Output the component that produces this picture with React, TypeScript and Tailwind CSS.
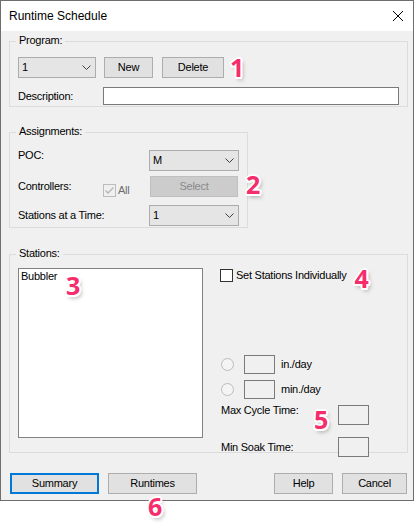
import React from 'react';

const Mark: React.FC<{ n: string; className?: string }> = ({ n, className = '' }) => (
  <span
    className={`shrink-0 font-['Open_Sans',Arial,sans-serif] text-[25px] leading-none font-bold text-[#f62d6d] [text-shadow:-1.5px_-1.5px_0_#fff,1.5px_-1.5px_0_#fff,-1.5px_1.5px_0_#fff,1.5px_1.5px_0_#fff,0_2px_0_#fff,2px_0_0_#fff,-2px_0_0_#fff,0_-2px_0_#fff,2px_3px_4px_rgba(0,0,0,0.35)] ${className}`}
  >
    {n}
  </span>
);

const Chevron = () => (
  <svg width="9" height="5" viewBox="0 0 9 5" className="shrink-0">
    <polyline points="0.5,0.5 4.5,4.5 8.5,0.5" fill="none" stroke="#404040" strokeWidth="1" />
  </svg>
);

const Combo: React.FC<{ value: string; className?: string }> = ({ value, className = '' }) => (
  <div className={`shrink-0 h-[21px] border border-[#acacac] bg-[#e5e5e5] flex items-center justify-between pl-[3px] pr-[4px] ${className}`}>
    <span>{value}</span>
    <Chevron />
  </div>
);

const Button: React.FC<{ label: string; className?: string }> = ({ label, className = '' }) => (
  <button className={`shrink-0 h-[21px] border border-[#adadad] bg-[#e1e1e1] flex items-center justify-center ${className}`}>
    {label}
  </button>
);

const TextBox: React.FC<{ className?: string }> = ({ className = '' }) => (
  <div className={`shrink-0 border border-[#7a7a7a] bg-[#f0f0f0] ${className}`} />
);

const Radio = () => (
  <span className="w-[13px] h-[13px] rounded-full border border-[#bcbcbc] bg-[#f4f4f4] shrink-0" />
);

const GroupLabel: React.FC<{ text: string }> = ({ text }) => (
  <span className="absolute -top-[8px] left-[6px] px-[3px] bg-[#f0f0f0] leading-[13px]">{text}</span>
);

export default function App() {
  return (
    <div className="relative w-[414px] h-[527px] bg-white font-['Liberation_Sans',Arial,sans-serif] text-black text-[11px] tracking-[-0.25px] leading-[13px]">
      <div className="w-[414px] h-[501px] border border-[#6e6e6e] flex flex-col">
        {/* Title bar */}
        <div className="h-[30px] bg-white flex items-center justify-between pl-[8px] pr-[10px]">
          <span className="text-[12px] tracking-normal">Runtime Schedule</span>
          <svg width="10" height="10" viewBox="0 0 10 10">
            <path d="M0 0 L10 10 M10 0 L0 10" stroke="#000" strokeWidth="1" />
          </svg>
        </div>

        <div className="flex-1 bg-[#f0f0f0] pt-[10px] pl-[8px]">
          {/* Program */}
          <div className="relative w-[399px] h-[66px] border border-[#dcdcdc] pt-[15px] pl-[8px]">
            <GroupLabel text="Program:" />
            <div className="flex items-center h-[21px]">
              <Combo value="1" className="w-[78px]" />
              <Button label="New" className="w-[49px] ml-[8px]" />
              <Button label="Delete" className="w-[62px] ml-[9px]" />
              <Mark n="1" className="ml-[6px]" />
            </div>
            <div className="flex items-center mt-[9px]">
              <span className="w-[85px] shrink-0">Description:</span>
              <div className="w-[296px] h-[18px] shrink-0 border border-[#7a7a7a] bg-white" />
            </div>
          </div>

          {/* Assignments */}
          <div className="relative w-[239px] h-[96px] mt-[25px] border border-[#dcdcdc] pt-[17px] pl-[8px]">
            <GroupLabel text="Assignments:" />
            <div className="flex items-start h-[21px]">
              <span className="w-[131px] shrink-0 -mt-[1px]">POC:</span>
              <Combo value="M" className="w-[90px]" />
            </div>
            <div className="flex items-center h-[21px] mt-[5px]">
              <span className="w-[85px] shrink-0">Controllers:</span>
              <div className="w-[47px] shrink-0 self-end flex items-center">
                <span className="w-[13px] h-[13px] border border-[#bcbcbc] bg-[#f0f0f0] flex items-center justify-center">
                  <svg width="11" height="11" viewBox="0 0 11 11">
                    <polyline points="1.5,5.5 4,8 9.5,2.5" fill="none" stroke="#b4b4b4" strokeWidth="1.3" />
                  </svg>
                </span>
                <span className="ml-[2px] text-[#6d6d6d]">All</span>
              </div>
              <button className="w-[88px] h-[21px] shrink-0 border border-[#bfbfbf] bg-[#cccccc] text-[#8a8a8a] flex items-center justify-center">
                Select
              </button>
              <Mark n="2" className="ml-[8px] -mt-[4px]" />
            </div>
            <div className="flex items-center h-[21px] mt-[8px]">
              <span className="w-[131px] shrink-0">Stations at a Time:</span>
              <Combo value="1" className="w-[90px]" />
            </div>
          </div>

          {/* Stations */}
          <div className="relative w-[399px] h-[199px] mt-[26px] border border-[#dcdcdc] pt-[13px] pl-[8px] flex">
            <GroupLabel text="Stations:" />
            <div className="relative w-[185px] h-[170px] shrink-0 border border-[#828282] bg-white pl-[2px] pt-[1px]">
              <span>Bubbler</span>
              <Mark n="3" className="absolute left-[47px] top-[4px]" />
            </div>
            <div className="ml-[17px] pt-[1px] flex flex-col w-[149px] shrink-0">
              <div className="flex items-center h-[13px]">
                <span className="w-[13px] h-[13px] border border-[#333333] bg-white shrink-0" />
                <span className="ml-[3px] whitespace-nowrap">Set Stations Individually</span>
                <Mark n="4" className="ml-[8px] mt-[6px]" />
              </div>
              <div className="flex items-center mt-[73px] pl-[1px]">
                <Radio />
                <TextBox className="w-[31px] h-[19px] ml-[10px]" />
                <span className="ml-[6px]">in./day</span>
              </div>
              <div className="flex items-center mt-[6px] pl-[1px]">
                <Radio />
                <TextBox className="w-[31px] h-[19px] ml-[10px]" />
                <span className="ml-[6px]">min./day</span>
              </div>
              <div className="flex items-start mt-[6px] pl-[1px]">
                <span className="flex-1 -mt-[1px]">Max Cycle Time:</span>
                <Mark n="5" className="self-center mr-[10px] mt-[2px]" />
                <TextBox className="w-[31px] h-[20px]" />
              </div>
              <div className="flex items-center mt-[5px] pl-[1px]">
                <span className="flex-1">Min Soak Time:</span>
                <TextBox className="w-[31px] h-[20px]" />
              </div>
            </div>
          </div>

          {/* Bottom buttons */}
          <div className="flex items-center mt-[20px] pl-[1px]">
            <button className="w-[89px] h-[21px] shrink-0 border-2 border-[#0078d7] bg-[#e1e1e1] flex items-center justify-center">
              Summary
            </button>
            <Button label="Runtimes" className="w-[89px] ml-[9px]" />
            <Button label="Help" className="w-[59px] ml-[77px]" />
            <Button label="Cancel" className="w-[65px] ml-[9px]" />
          </div>
        </div>
      </div>
      <Mark n="6" className="absolute left-[148px] top-[494px]" />
    </div>
  );
}
